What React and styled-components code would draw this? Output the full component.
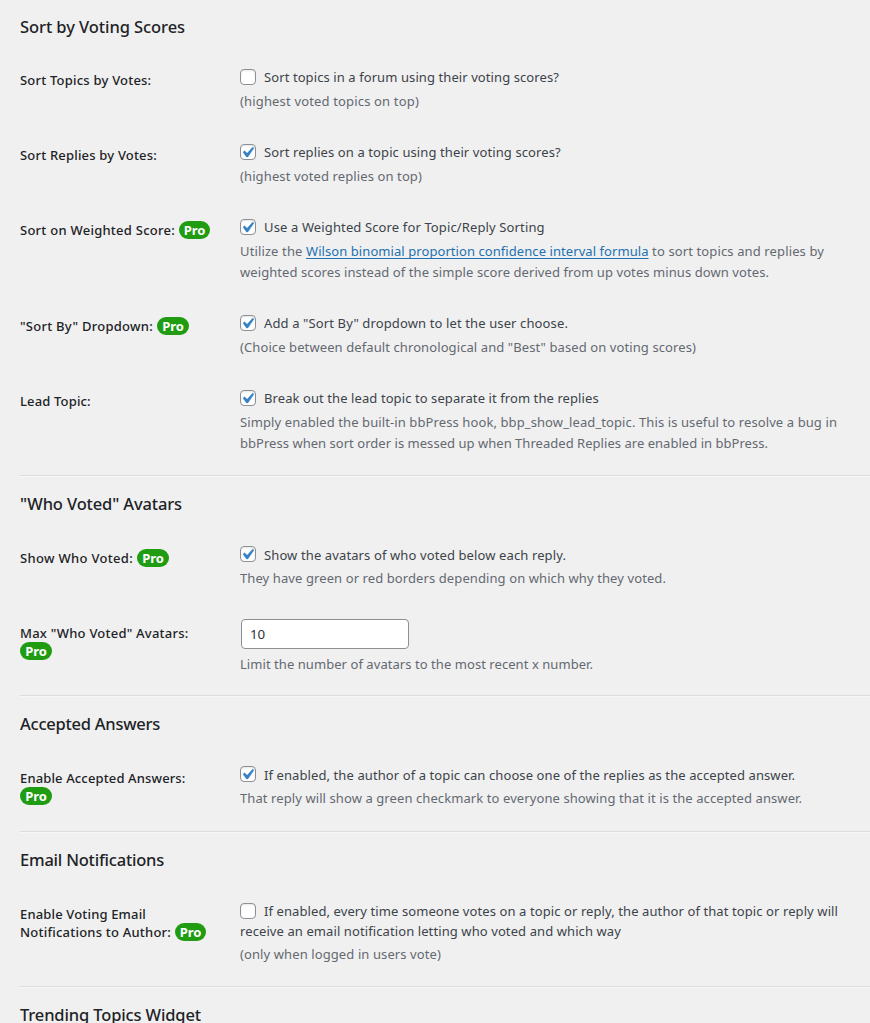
import React from "react";
import styled, { createGlobalStyle } from "styled-components";

const GlobalStyle = createGlobalStyle`
  html { overflow: hidden; }
  body {
    margin: 0;
    height: 1023px;
    overflow: hidden;
    background: #f0f0f0;
    color: #3c434a;
    font-family: "Noto Sans", "Open Sans", sans-serif;
    font-size: 13px;
    line-height: 20px;
  }
`;

const Page = styled.main`
  padding-left: 20px;
`;

const Section = styled.section`
  padding-top: 15px;
  padding-bottom: ${(p) => p.$bottom ?? 6}px;

  & + & {
    border-top: 1px solid #dcdcde;
    box-shadow: inset 0 1px 0 #f6f7f7;
    padding-top: 16px;
  }
`;

const Heading = styled.h2`
  margin: 0 0 ${(p) => p.$gap ?? 13}px;
  color: #1d2327;
  font-size: 16.5px;
  font-weight: 500;
  line-height: 24px;
  letter-spacing: ${(p) => p.$track}px;
  white-space: nowrap;
`;

const Row = styled.div`
  display: grid;
  grid-template-columns: 220px 1fr;
`;

const Label = styled.div`
  padding: 20px 0;
  color: #1d2327;
  font-weight: 500;
  line-height: 18px;
`;

const Field = styled.div`
  padding: 16px 0 14px;
`;

const Line = styled.span`
  display: block;
  white-space: nowrap;
  letter-spacing: ${(p) => p.$track ?? 0.1}px;
`;

const Run = styled.span`
  letter-spacing: ${(p) => p.$track}px;
`;

const Option = styled.label`
  display: block;
`;

const OptionLine = styled.span`
  display: flex;
  align-items: flex-start;
  height: 20px;
`;

const Box = styled.span`
  box-sizing: border-box;
  display: inline-flex;
  flex: none;
  width: 16px;
  height: 16px;
  margin: ${(p) => (p.$raised ? 1 : 2)}px 8px 0 0;
  border: 1px solid #8c8f94;
  border-radius: 4px;
  background: #fff;
  box-shadow: inset 0 1px 2px rgba(0, 0, 0, 0.1);

  svg {
    width: 21px;
    height: 21px;
    margin: -3px 0 0 -4px;
    flex: none;
  }
`;

const Description = styled.p`
  margin: ${(p) => p.$gap ?? 4}px 0 0;
  padding-bottom: ${(p) => 4 - (p.$gap ?? 4)}px;
  color: #646970;
  line-height: 21px;
`;

const Link = styled.a`
  color: #2271b1;
  text-decoration: underline;
  text-underline-offset: 2px;
  text-decoration-thickness: 1px;
  text-decoration-skip-ink: none;
`;

const Badge = styled.span`
  display: inline-block;
  box-sizing: border-box;
  width: ${(p) => p.$width ?? 32}px;
  height: 18px;
  border-radius: 9px;
  background: #1f9c12;
  color: #fff;
  font-weight: 700;
  line-height: 18px;
  text-align: center;
  letter-spacing: 0;
  vertical-align: top;
  margin-left: ${(p) => (p.$inline ? 4 : 0)}px;
`;

const NumberInput = styled.input`
  display: block;
  box-sizing: border-box;
  width: 168px;
  height: 30px;
  margin: -1px 0 0 1px;
  padding: 0 8px;
  border: 1px solid #8c8f94;
  border-radius: 4px;
  background: #fff;
  color: #2c3338;
  font: 13.3px "Noto Sans", sans-serif;
  outline: none;
`;

function Checkbox({ checked, raised }) {
  return (
    <Box role="checkbox" aria-checked={!!checked} $raised={raised}>
      {checked && (
        <svg viewBox="0 0 20 20">
          <path
            d="M14.83 4.89l1.34.94-5.81 8.38H9.02L5.78 9.67l1.34-1.25 2.57 2.4z"
            fill="#3582c4"
            stroke="#3582c4"
            strokeWidth="0.4"
          />
        </svg>
      )}
    </Box>
  );
}

function Check({ checked, raised, track, more, children }) {
  return (
    <Option>
      <OptionLine>
        <Checkbox checked={checked} raised={raised} />
        <Line $track={track}>{children}</Line>
      </OptionLine>
      {more}
    </Option>
  );
}

export default function App() {
  return (
    <>
      <GlobalStyle />
      <Page>
        <Section $bottom={7}>
          <Heading $track={-0.075} $gap={12}>Sort by Voting Scores</Heading>
          <Row>
            <Label><Line $track={0.21}>Sort Topics by Votes:</Line></Label>
            <Field>
              <Check track={0.088}>Sort topics in a forum using their voting scores?</Check>
              <Description><Line $track={0.16}>(highest voted topics on top)</Line></Description>
            </Field>
          </Row>
          <Row>
            <Label><Line $track={0.187}>Sort Replies by Votes:</Line></Label>
            <Field>
              <Check checked track={0.1}>Sort replies on a topic using their voting scores?</Check>
              <Description><Line $track={0.112}>(highest voted replies on top)</Line></Description>
            </Field>
          </Row>
          <Row>
            <Label><Line $track={0.253}>Sort on Weighted Score:<Badge $inline $width={31}>Pro</Badge></Line></Label>
            <Field>
              <Check checked track={0.128}>Use a Weighted Score for Topic/Reply Sorting</Check>
              <Description>
                <Line $track={0.125}>
                  Utilize the <Link><Run $track={0.068}>Wilson binomial proportion confidence interval formula</Run></Link> to sort topics and replies by
                </Line>
                <Line $track={0.077}>weighted scores instead of the simple score derived from up votes minus down votes.</Line>
              </Description>
            </Field>
          </Row>
          <Row>
            <Label><Line $track={0.261}>"Sort By" Dropdown:<Badge $inline>Pro</Badge></Line></Label>
            <Field>
              <Check checked track={0.123}>Add a "Sort By" dropdown to let the user choose.</Check>
              <Description><Line $track={0.095}>(Choice between default chronological and "Best" based on voting scores)</Line></Description>
            </Field>
          </Row>
          <Row>
            <Label><Line $track={0.15}>Lead Topic:</Line></Label>
            <Field>
              <Check checked track={0.085}>Break out the lead topic to separate it from the replies</Check>
              <Description>
                <Line $track={0.101}>Simply enabled the built-in bbPress hook, bbp_show_lead_topic. This is useful to resolve a bug in</Line>
                <Line $track={0.033}>bbPress when sort order is messed up when Threaded Replies are enabled in bbPress.</Line>
              </Description>
            </Field>
          </Row>
        </Section>

        <Section>
          <Heading $track={-0.14}>"Who Voted" Avatars</Heading>
          <Row>
            <Label><Line $track={0.315}>Show Who Voted:<Badge $inline>Pro</Badge></Line></Label>
            <Field>
              <Check checked raised track={0.115}>Show the avatars of who voted below each reply.</Check>
              <Description $gap={3}><Line $track={0.094}>They have green or red borders depending on which why they voted.</Line></Description>
            </Field>
          </Row>
          <Row>
            <Label>
              <Line $track={0.227}>Max "Who Voted" Avatars:</Line>
              <Line><Badge>Pro</Badge></Line>
            </Label>
            <Field>
              <NumberInput type="text" defaultValue="10" />
              <Description $gap={5}><Line $track={0.058}>Limit the number of avatars to the most recent x number.</Line></Description>
            </Field>
          </Row>
        </Section>

        <Section>
          <Heading $track={-0.25}>Accepted Answers</Heading>
          <Row>
            <Label>
              <Line $track={0.137}>Enable Accepted Answers:</Line>
              <Line><Badge>Pro</Badge></Line>
            </Label>
            <Field>
              <Check checked raised track={0.093}>If enabled, the author of a topic can choose one of the replies as the accepted answer.</Check>
              <Description $gap={3}><Line $track={0.089}>That reply will show a green checkmark to everyone showing that it is the accepted answer.</Line></Description>
            </Field>
          </Row>
        </Section>

        <Section>
          <Heading $track={-0.22}>Email Notifications</Heading>
          <Row>
            <Label>
              <Line $track={0.158}>Enable Voting Email</Line>
              <Line $track={0.215}>Notifications to Author:<Badge $inline $width={31}>Pro</Badge></Line>
            </Label>
            <Field>
              <Check
                track={0.093}
                more={<Line $track={0.095}>receive an email notification letting who voted and which way</Line>}
              >
                If enabled, every time someone votes on a topic or reply, the author of that topic or reply will
              </Check>
              <Description $gap={3}><Line $track={0.1}>(only when logged in users vote)</Line></Description>
            </Field>
          </Row>
        </Section>

        <Section>
          <Heading $track={-0.137}>Trending Topics Widget</Heading>
        </Section>
      </Page>
    </>
  );
}
